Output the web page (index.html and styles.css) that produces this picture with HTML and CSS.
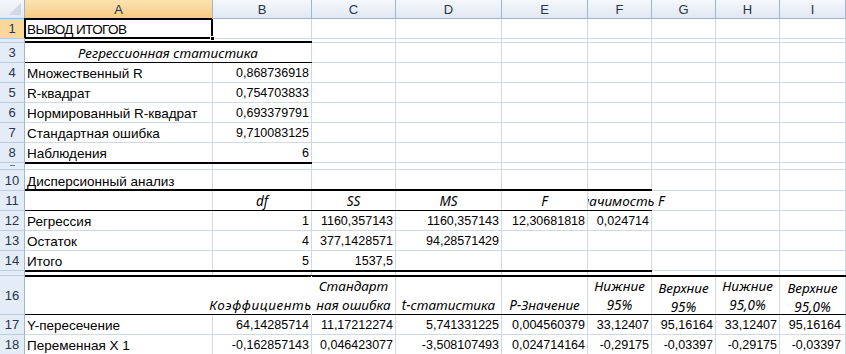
FILE: index.html
```html
<!DOCTYPE html>
<html lang="ru">
<head>
    <meta charset="UTF-8">
    <title>Вывод итогов</title>
    <link rel="stylesheet" href="styles.css">
</head>
<body>

    <!-- Лист -->
    <div class="sheet">

        <!-- Заголовки столбцов -->
        <div class="row hdr">
            <div class="corner">
                <svg width="24" height="18" viewBox="0 0 24 18"><polygon points="21,3 21,15 9,15" fill="#cfd8e3"/></svg>
            </div>
            <div class="ch sel">A</div>
            <div class="ch">B</div>
            <div class="ch">C</div>
            <div class="ch">D</div>
            <div class="ch">E</div>
            <div class="ch">F</div>
            <div class="ch">G</div>
            <div class="ch">H</div>
            <div class="ch">I</div>
        </div>

        <div class="row">
            <div class="rh sel">1</div>
            <div class="c act">ВЫВОД ИТОГОВ<span class="handle"></span></div>
            <div class="c"></div><div class="c"></div><div class="c"></div><div class="c"></div>
            <div class="c"></div><div class="c"></div><div class="c"></div><div class="c"></div>
        </div>

        <div class="row h4">
            <div class="rh"></div>
            <div class="c bk"></div><div class="c bk"></div>
            <div class="c"></div><div class="c"></div><div class="c"></div><div class="c"></div>
            <div class="c"></div><div class="c"></div><div class="c"></div>
        </div>

        <!-- Регрессионная статистика -->
        <div class="row">
            <div class="rh">3</div>
            <div class="c i bl span2">Регрессионная статистика</div>
            <div class="c"></div><div class="c"></div><div class="c"></div><div class="c"></div>
            <div class="c"></div><div class="c"></div><div class="c"></div>
        </div>

        <div class="row">
            <div class="rh">4</div>
            <div class="c">Множественный R</div>
            <div class="c n">0,868736918</div>
            <div class="c"></div><div class="c"></div><div class="c"></div><div class="c"></div>
            <div class="c"></div><div class="c"></div><div class="c"></div>
        </div>

        <div class="row">
            <div class="rh">5</div>
            <div class="c">R-квадрат</div>
            <div class="c n">0,754703833</div>
            <div class="c"></div><div class="c"></div><div class="c"></div><div class="c"></div>
            <div class="c"></div><div class="c"></div><div class="c"></div>
        </div>

        <div class="row">
            <div class="rh">6</div>
            <div class="c">Нормированный R-квадрат</div>
            <div class="c n">0,693379791</div>
            <div class="c"></div><div class="c"></div><div class="c"></div><div class="c"></div>
            <div class="c"></div><div class="c"></div><div class="c"></div>
        </div>

        <div class="row">
            <div class="rh">7</div>
            <div class="c">Стандартная ошибка</div>
            <div class="c n">9,710083125</div>
            <div class="c"></div><div class="c"></div><div class="c"></div><div class="c"></div>
            <div class="c"></div><div class="c"></div><div class="c"></div>
        </div>

        <div class="row">
            <div class="rh">8</div>
            <div class="c bl">Наблюдения</div>
            <div class="c n bl">6</div>
            <div class="c"></div><div class="c"></div><div class="c"></div><div class="c"></div>
            <div class="c"></div><div class="c"></div><div class="c"></div>
        </div>

        <div class="row h7">
            <div class="rh"><span class="stub"></span></div>
            <div class="c tk"></div><div class="c tk"></div>
            <div class="c"></div><div class="c"></div><div class="c"></div><div class="c"></div>
            <div class="c"></div><div class="c"></div><div class="c"></div>
        </div>

        <!-- Дисперсионный анализ -->
        <div class="row h21">
            <div class="rh">10</div>
            <div class="c bk">Дисперсионный анализ</div>
            <div class="c bk"></div><div class="c bk"></div><div class="c bk"></div>
            <div class="c bk"></div><div class="c bk"></div>
            <div class="c"></div><div class="c"></div><div class="c"></div>
        </div>

        <div class="row">
            <div class="rh">11</div>
            <div class="c bl"></div>
            <div class="c i bl">df</div>
            <div class="c i bl">SS</div>
            <div class="c i bl">MS</div>
            <div class="c i bl">F</div>
            <div class="c i bl ovr">Значимость F</div>
            <div class="c"></div><div class="c"></div><div class="c"></div>
        </div>

        <div class="row">
            <div class="rh">12</div>
            <div class="c">Регрессия</div>
            <div class="c n">1</div>
            <div class="c n">1160,357143</div>
            <div class="c n">1160,357143</div>
            <div class="c n">12,30681818</div>
            <div class="c n">0,024714</div>
            <div class="c"></div><div class="c"></div><div class="c"></div>
        </div>

        <div class="row">
            <div class="rh">13</div>
            <div class="c">Остаток</div>
            <div class="c n">4</div>
            <div class="c n">377,1428571</div>
            <div class="c n">94,28571429</div>
            <div class="c"></div><div class="c"></div>
            <div class="c"></div><div class="c"></div><div class="c"></div>
        </div>

        <div class="row">
            <div class="rh">14</div>
            <div class="c bl">Итого</div>
            <div class="c n bl">5</div>
            <div class="c n bl">1537,5</div>
            <div class="c bl"></div><div class="c bl"></div><div class="c bl"></div>
            <div class="c"></div><div class="c"></div><div class="c"></div>
        </div>

        <div class="row h5">
            <div class="rh"></div>
            <div class="c tk bl"></div><div class="c tk bl"></div><div class="c tk bl"></div>
            <div class="c tk bl"></div><div class="c tk bl"></div><div class="c tk bl"></div>
            <div class="c bl"></div><div class="c bl"></div><div class="c bl"></div>
        </div>

        <!-- Коэффициенты -->
        <div class="row h39">
            <div class="rh">16</div>
            <div class="c tk bl nv"></div>
            <div class="c i tk bl ovl">Коэффициенты</div>
            <div class="c i w tk bl"><span>Стандарт<br>ная ошибка</span></div>
            <div class="c i tk bl">t-статистика</div>
            <div class="c i tk bl">P-Значение</div>
            <div class="c i w tk bl"><span>Нижние<br>95%</span></div>
            <div class="c i w lo tk bl"><span>Верхние<br>95%</span></div>
            <div class="c i w tk bl"><span>Нижние<br>95,0%</span></div>
            <div class="c i w lo tk bl"><span>Верхние<br>95,0%</span></div>
        </div>

        <div class="row">
            <div class="rh">17</div>
            <div class="c">Y-пересечение</div>
            <div class="c n">64,14285714</div>
            <div class="c n">11,17212274</div>
            <div class="c n">5,741331225</div>
            <div class="c n">0,004560379</div>
            <div class="c n">33,12407</div>
            <div class="c n">95,16164</div>
            <div class="c n">33,12407</div>
            <div class="c n last">95,16164</div>
        </div>

        <div class="row">
            <div class="rh">18</div>
            <div class="c">Переменная X 1</div>
            <div class="c n">-0,162857143</div>
            <div class="c n">0,046423077</div>
            <div class="c n">-3,508107493</div>
            <div class="c n">0,024714164</div>
            <div class="c n">-0,29175</div>
            <div class="c n">-0,03397</div>
            <div class="c n">-0,29175</div>
            <div class="c n last">-0,03397</div>
        </div>

    </div>

</body>
</html>
```

FILE: styles.css
```css
/* Общие */
* {
    box-sizing: border-box;
}

body {
    margin: 0;
    background: #fff;
    font-family: 'Liberation Sans', Arial, sans-serif;
    color: #000;
}

.sheet {
    width: 846px;
    height: 354px;
    overflow: hidden;
}

/* Строки листа */
.row {
    display: grid;
    grid-template-columns: 25px 188px 99px 84px 106px 86px 64px 64px 64px 66px;
    height: 20px;
}

.row.hdr { height: 19px; }
.row.h4 { height: 4px; }
.row.h5 { height: 5px; }
.row.h7 { height: 7px; }
.row.h21 { height: 21px; }
.row.h39 { height: 39px; }

/* Заголовки */
.corner {
    background: linear-gradient(#f4f7fb, #e3eaf3);
    border-right: 1px solid #9eb6ce;
    border-bottom: 1px solid #9eb6ce;
}

.corner svg {
    display: block;
}

.ch {
    display: flex;
    align-items: center;
    justify-content: center;
    background: linear-gradient(#f5f8fc, #e0e8f2);
    border-right: 1px solid #9eb6ce;
    border-bottom: 1px solid #9eb6ce;
    font-size: 13px;
    color: #27354a;
}

.ch.sel {
    background: linear-gradient(#fbe3b2, #f7cb80);
    border-bottom-color: #f29536;
}

.rh {
    display: flex;
    align-items: center;
    justify-content: center;
    overflow: hidden;
    background: #e4ecf7;
    border-right: 1px solid #9eb6ce;
    border-bottom: 1px solid #bccde0;
    font-size: 13px;
    line-height: 15px;
    color: #27354a;
}

.rh.sel {
    background: #f9d89c;
    border-right-color: #f29536;
}

/* обрезанная цифра скрытой строки 9 */
.rh .stub {
    width: 5px;
    height: 1px;
    margin-top: -2px;
    background: #6b7a90;
}

/* Ячейки */
.c {
    display: flex;
    align-items: flex-end;
    padding: 0 3px 1px 2px;
    white-space: nowrap;
    overflow: hidden;
    border-bottom: 1px solid #d0d7e5;
    box-shadow: inset -1px 0 0 #d0d7e5; /* вертикальная сетка */
    font-size: 13.5px;
    line-height: 15px;
}

.c.n {
    justify-content: flex-end;
    font-size: 12.5px;
}

.c.last {
    padding-right: 5px;
}

.c.i {
    justify-content: center;
    font-family: 'Noto Sans', sans-serif;
    font-style: italic;
    font-size: 13.5px;
}

.c.w {
    white-space: normal;
    text-align: center;
    line-height: 19px;
}

.c.w span {
    margin-bottom: -2px;
}

.c.w.lo span {
    margin-bottom: -4px;
}

.span2 {
    grid-column: span 2;
}

/* Границы */
.c.bl {
    border-bottom-color: #000;
}

.c.bk {
    border-bottom-color: #000;
    box-shadow: inset 0 -1px 0 #000, inset -1px 0 0 #d0d7e5;
}

.c.tk {
    box-shadow: inset 0 1px 0 #000, inset -1px 0 0 #d0d7e5;
}

.c.tk.nv {
    box-shadow: inset 0 1px 0 #000;
}

/* Текст, выходящий за ячейку */
.c.ovr {
    overflow: visible;
    box-shadow: none;
    clip-path: inset(0 -80px 0 0);
}

.c.ovl {
    overflow: visible;
    letter-spacing: 0.6px;
    clip-path: inset(0 1px 0 -80px);
}

/* Активная ячейка A1 */
.c.act {
    position: relative;
    overflow: visible;
    letter-spacing: -0.6px;
    border-bottom-color: #000;
    box-shadow: inset 1px 1px 0 #000, inset -2px -1px 0 #000, -1px -1px 0 #000;
}

.handle {
    position: absolute;
    right: -2px;
    bottom: -3px;
    width: 5px;
    height: 5px;
    background: #000;
    border: 1px solid #fff;
}
```
